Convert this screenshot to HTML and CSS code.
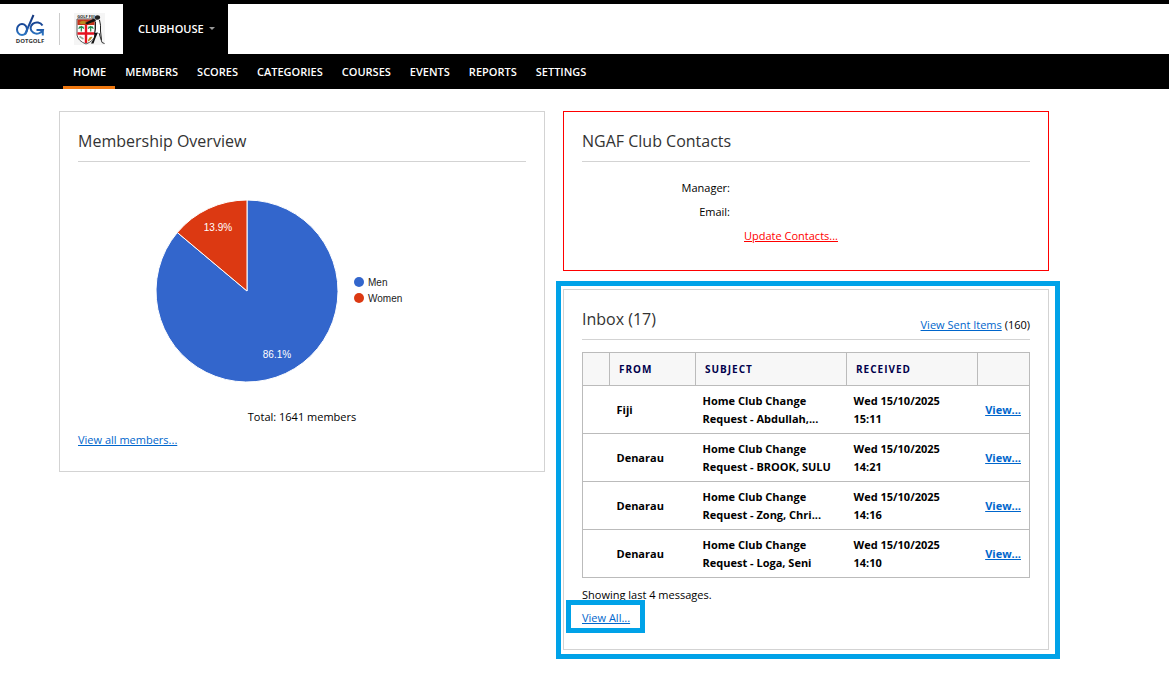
FILE: index.html
```
<!DOCTYPE html>
<html lang="en">
<head>
  <meta charset="UTF-8">
  <meta name="viewport" content="width=device-width, initial-scale=1.0">
  <title>Clubhouse</title>
  <link rel="stylesheet" href="styles.css">
</head>
<body>
  <header class="topbar">
    <a class="logo logo-dotgolf" href="#">
      <svg width="30" height="32" viewBox="0 0 30 32" role="img" aria-label="DotGolf">
        <defs>
          <linearGradient id="blue" gradientUnits="userSpaceOnUse" x1="0" y1="2" x2="0" y2="23">
            <stop offset="0" stop-color="#12357c"/>
            <stop offset="0.5" stop-color="#1a4a9a"/>
            <stop offset="1" stop-color="#2f7cc8"/>
          </linearGradient>
        </defs>
        <g fill="none" stroke="url(#blue)" stroke-width="2">
          <ellipse cx="7" cy="16.500" rx="5" ry="5.400"/>
          <path d="M10 21.500 L18.500 2"/>
          <path d="M27.500 12.500 A6.300 5.600 0 1 0 27.800 17 L21.500 17"/>
          <path d="M27.800 16 V22.500"/>
        </g>
        <text class="dotgolf-text" x="15" y="29.600" text-anchor="middle">DOTGOLF</text>
      </svg>
    </a>
    <a class="logo logo-club" href="#">
      <svg width="31" height="32" viewBox="0 0 31 32" role="img" aria-label="Golf Fiji">
        <rect width="31" height="32" fill="#f5f5f5"/>
        <text class="fiji-text" x="12" y="5" text-anchor="middle">GOLF FIJI</text>
        <path d="M3 6 H21 V22 Q20 28 12 31 Q4 28 3 22 Z" fill="#fff" stroke="#555" stroke-width="1"/>
        <path d="M3.500 6.500 H20.500 V12 H3.500 Z" fill="#c4321c"/>
        <path d="M5 10 Q8 6.500 12 8.500 T18 8 L18 10 L13 11 L7 11 Z" fill="#b98a1e"/>
        <path d="M12 12 V30 M3.500 20.500 H20.500" stroke="#e4131f" stroke-width="2.400"/>
        <path d="M4.500 15.500 L7.300 13.500 L10 15.500 M7.300 13.500 V18.500 M5 14 H9.500 M14 15.500 L16.700 13.500 L19.500 15.500 M16.700 13.500 V18.500 M14.500 14 H19" stroke="#1f8a4c" stroke-width="1.200" fill="none"/>
        <path d="M5.500 23.500 L9.500 26" stroke="#9aa99a" stroke-width="1.500"/>
        <path d="M14 27 Q16 22.500 18.500 24 Q17 27 14 28.500 Z" fill="#b98a22"/>
        <path d="M22.500 9 L26 9 L27 17 L26.500 22 L21 23 L21.500 16 Z" fill="#fff"/>
        <ellipse cx="23.500" cy="4.500" rx="2.600" ry="2.300" fill="#222"/>
        <path d="M11 10 L20 5.500 L22 8 L19 9 L13 11.500 Z" fill="#111"/>
        <path d="M25.500 7 Q27 12 26.500 18 L27.500 27" stroke="#222" stroke-width="1" fill="none"/>
        <path d="M21.500 9 L21.500 16 L20.500 21" stroke="#222" stroke-width="1" fill="none"/>
        <path d="M20.500 20 L24 19.500 L21.500 25 L19.500 30.500 L17 30.500 L20 25 Z" fill="#111"/>
        <path d="M25 20 L28 29.500 L30.500 30.500" stroke="#333" stroke-width="1" fill="none"/>
      </svg>
    </a>
    <button class="section-btn" type="button">CLUBHOUSE <span class="caret"></span></button>
  </header>

  <nav class="nav">
    <a class="active" href="#">HOME</a>
    <a href="#">MEMBERS</a>
    <a href="#">SCORES</a>
    <a href="#">CATEGORIES</a>
    <a href="#">COURSES</a>
    <a href="#">EVENTS</a>
    <a href="#">REPORTS</a>
    <a href="#">SETTINGS</a>
  </nav>

  <main class="dashboard">
    <section class="card">
      <div class="card-head">
        <h2>Membership Overview</h2>
      </div>
      <svg class="chart" width="340" height="246" viewBox="0 0 340 246">
        <g stroke="#fff" stroke-width="1">
          <path d="M169 129 V38 A91 91 0 1 1 99.300 70.500 Z" fill="#3366cc"/>
          <path d="M169 129 L99.300 70.500 A91 91 0 0 1 169 38 Z" fill="#dc3912"/>
        </g>
        <g class="slice-label">
          <text x="140" y="69">13.9%</text>
          <text x="199" y="196">86.1%</text>
        </g>
        <circle cx="281" cy="120" r="5" fill="#3366cc"/>
        <circle cx="281" cy="136" r="5" fill="#dc3912"/>
        <g class="legend">
          <text x="290" y="124">Men</text>
          <text x="290" y="140">Women</text>
        </g>
      </svg>
      <p class="total">Total: 1641 members</p>
      <p><a href="#">View all members...</a></p>
    </section>

    <div class="column">
      <section class="card card-alert">
        <div class="card-head">
          <h2>NGAF Club Contacts</h2>
        </div>
        <dl class="contacts">
          <dt>Manager:</dt>
          <dd></dd>
          <dt>Email:</dt>
          <dd></dd>
          <dt></dt>
          <dd><a class="update" href="#">Update Contacts...</a></dd>
        </dl>
      </section>

      <section class="card inbox">
        <div class="card-head">
          <h2>Inbox (17)</h2>
          <span class="sent"><a href="#">View Sent Items</a> (160)</span>
        </div>
        <table class="messages">
          <colgroup>
            <col class="col-flag">
            <col class="col-from">
            <col>
            <col class="col-received">
            <col class="col-view">
          </colgroup>
          <thead>
            <tr><th></th><th>FROM</th><th>SUBJECT</th><th>RECEIVED</th><th></th></tr>
          </thead>
          <tbody>
            <tr>
              <td></td>
              <td>Fiji</td>
              <td>Home Club Change<br>Request - Abdullah,...</td>
              <td>Wed 15/10/2025<br>15:11</td>
              <td><a href="#">View...</a></td>
            </tr>
            <tr>
              <td></td>
              <td>Denarau</td>
              <td>Home Club Change<br>Request - BROOK, SULU</td>
              <td>Wed 15/10/2025<br>14:21</td>
              <td><a href="#">View...</a></td>
            </tr>
            <tr>
              <td></td>
              <td>Denarau</td>
              <td>Home Club Change<br>Request - Zong, Chri...</td>
              <td>Wed 15/10/2025<br>14:16</td>
              <td><a href="#">View...</a></td>
            </tr>
            <tr>
              <td></td>
              <td>Denarau</td>
              <td>Home Club Change<br>Request - Loga, Seni</td>
              <td>Wed 15/10/2025<br>14:10</td>
              <td><a href="#">View...</a></td>
            </tr>
          </tbody>
        </table>
        <p>Showing last 4 messages.</p>
        <p><a class="view-all" href="#">View All...</a></p>
      </section>
    </div>
  </main>
</body>
</html>
```
FILE: styles.css
```
* {
  box-sizing: border-box;
}
body {
  margin: 0;
  font-family: "Open Sans", "Noto Sans", sans-serif;
  font-size: 11px;
  line-height: 18px;
  color: #000;
  background: #fff;
}
a {
  color: #0066cc;
}
h2, p, dl, dd {
  margin: 0;
}

/* header */
.topbar {
  display: flex;
  align-items: center;
  height: 54px;
  border-top: 4px solid #000;
}
.logo {
  display: flex;
}
.logo-dotgolf {
  padding: 0 14px 0 15px;
  border-right: 1px solid #ccc;
}
.logo-club {
  padding: 0 18px 0 14px;
}
.dotgolf-text {
  font: bold 6px "Open Sans", sans-serif;
  fill: #333;
}
.fiji-text {
  font: bold 4px "Open Sans", sans-serif;
  fill: #222;
}
.section-btn {
  display: flex;
  align-items: center;
  gap: 5px;
  align-self: stretch;
  padding: 0 13px 1px 15px;
  border: none;
  background: #000;
  color: #fff;
  font: 600 11px "Open Sans", sans-serif;
  cursor: pointer;
}
.caret {
  border: 3px solid transparent;
  border-top-color: #999;
  border-bottom: none;
}

/* main menu */
.nav {
  display: flex;
  height: 35px;
  padding-left: 63px;
  background: #000;
}
.nav a {
  padding: 9px 9px 0 10px;
  border-bottom: 3px solid transparent;
  color: #fff;
  font-weight: 600;
  text-decoration: none;
}
.nav a.active {
  border-bottom-color: #f07810;
}

/* cards */
.dashboard {
  display: grid;
  grid-template-columns: 1fr 1fr;
  align-items: start;
  gap: 18px;
  padding: 22px 120px 30px 59px;
}
.column {
  display: grid;
  gap: 18px;
}
.card {
  padding: 18px 18px 22px;
  border: 1px solid #d3d3d3;
}
.card-alert {
  border-color: #f00;
}
.card-head {
  display: flex;
  justify-content: space-between;
  align-items: flex-end;
  padding-bottom: 3px;
  border-bottom: 1px solid #d3d3d3;
}
.card-head h2 {
  padding-bottom: 6px;
  font-size: 16px;
  line-height: 22px;
  font-weight: normal;
  color: #333;
}
.sent {
  padding-bottom: 2px;
}

/* membership pie */
.chart {
  display: block;
}
.slice-label,
.legend {
  font: 10px "Liberation Sans", Arial, sans-serif;
}
.slice-label {
  fill: #fff;
  text-anchor: middle;
}
.legend {
  fill: #222;
}
.total {
  margin-bottom: 5px;
  text-align: center;
}

.contacts {
  display: grid;
  grid-template-columns: 148px 1fr;
  gap: 6px 14px;
  padding: 17px 0 3px;
}
.contacts dt {
  text-align: right;
}
.contacts .update {
  color: #f00;
}

/* inbox */
.inbox {
  position: relative;
}
.inbox::after {
  content: "";
  position: absolute;
  inset: -9px -12px -10px -8px;
  border: 5px solid #00a2e8;
  pointer-events: none;
}
.messages {
  width: 100%;
  margin: 12px 0 8px;
  border: 1px solid #bbb;
  border-collapse: collapse;
  table-layout: fixed;
}
.messages tr {
  border-bottom: 1px solid #bbb;
}
.messages th {
  height: 33px;
  padding: 0 9px;
  border: 1px solid #bbb;
  background: #f7f7f7;
  color: #00004c;
  font-size: 10px;
  letter-spacing: 1px;
  text-align: left;
}
.messages td {
  height: 48px;
  padding: 0 8px 0 7px;
  font-weight: bold;
}
.messages td:last-child {
  text-align: right;
}
.col-flag {
  width: 27px;
}
.col-from {
  width: 86px;
}
.col-received {
  width: 131px;
}
.col-view {
  width: 52px;
}
.inbox p + p {
  margin-top: 5px;
}
.view-all {
  position: relative;
}
.view-all::after {
  content: "";
  position: absolute;
  inset: -10px -15px -8px -16px;
  border: 5px solid #00a2e8;
}
```
